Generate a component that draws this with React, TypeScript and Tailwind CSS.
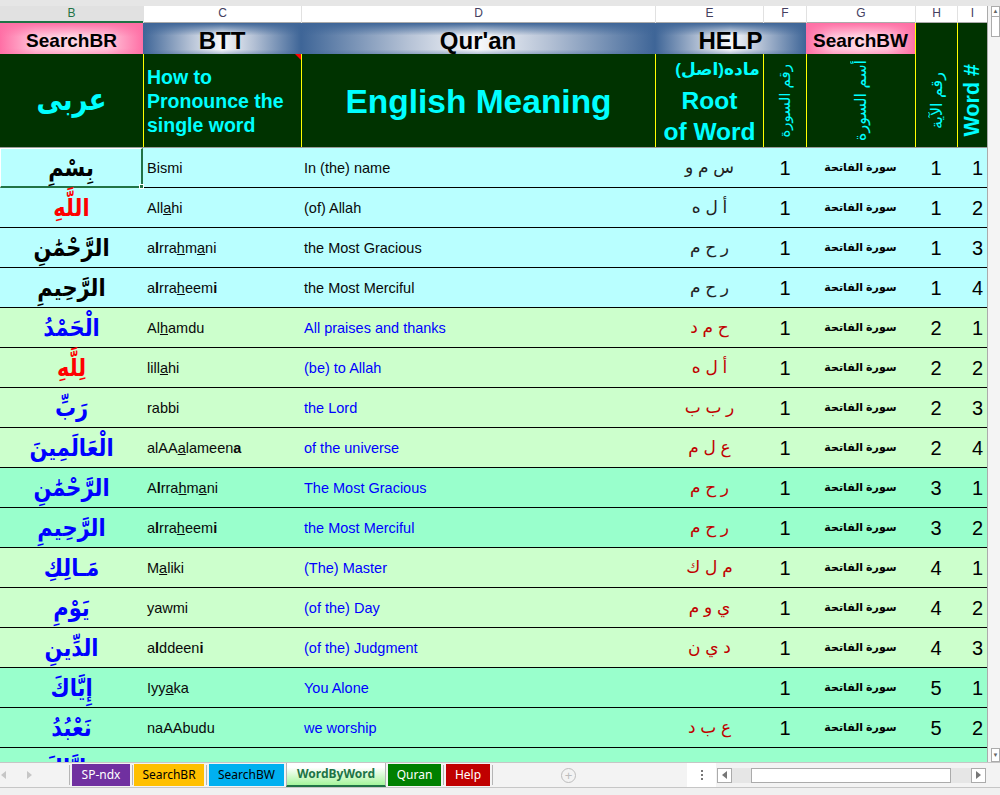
import { ReactNode } from 'react'

const cols = 'grid grid-cols-[143px_158px_354px_108px_43px_109px_42px_30px]'
const banner =
  'bg-[linear-gradient(180deg,#3e6597_0%,#3e659700_32%,#3e659700_68%,#3e6597_100%),linear-gradient(90deg,#3e6597_0%,#b4c1d5_30%,#f8f9fb_50%,#b4c1d5_70%,#3e6597_100%)]'
const pink =
  'bg-[linear-gradient(180deg,#ff6fa5_0%,#ff6fa500_35%,#ff6fa500_65%,#ff6fa5_100%),linear-gradient(90deg,#ff6fa5_0%,#ffc4da_25%,#ffd6e4_50%,#ffc4da_75%,#ff6fa5_100%)]'

interface Row {
  bg: string
  ar: string
  say: ReactNode
  en: string
  root: string
  aya?: number
  word?: number
  red?: boolean
}

const cyan = 'bg-[#b9ffff]'
const mint = 'bg-[#ccffcc]'
const teal = 'bg-[#99ffcc]'

const rows: Row[] = [
  { bg: cyan, ar: 'بِسْمِ', say: 'Bismi', en: 'In (the) name', root: 'س م و', aya: 1, word: 1 },
  { bg: cyan, ar: 'اللَّهِ', say: <>All<u>a</u>hi</>, en: '(of) Allah', root: 'أ ل ه', aya: 1, word: 2, red: true },
  { bg: cyan, ar: 'الرَّحْمَٰنِ', say: <>a<b>l</b>rra<u>h</u>m<u>a</u>ni</>, en: 'the Most Gracious', root: 'ر ح م', aya: 1, word: 3 },
  { bg: cyan, ar: 'الرَّحِيمِ', say: <>a<b>l</b>rra<u>h</u>eem<b>i</b></>, en: 'the Most Merciful', root: 'ر ح م', aya: 1, word: 4 },
  { bg: mint, ar: 'الْحَمْدُ', say: <>Al<u>h</u>amdu</>, en: 'All praises and thanks', root: 'ح م د', aya: 2, word: 1 },
  { bg: mint, ar: 'لِلَّهِ', say: <>lill<u>a</u>hi</>, en: '(be) to Allah', root: 'أ ل ه', aya: 2, word: 2, red: true },
  { bg: mint, ar: 'رَبِّ', say: 'rabbi', en: 'the Lord', root: 'ر ب ب', aya: 2, word: 3 },
  { bg: mint, ar: 'الْعَالَمِينَ', say: <>alAA<u>a</u>lameen<b>a</b></>, en: 'of the universe', root: 'ع ل م', aya: 2, word: 4 },
  { bg: teal, ar: 'الرَّحْمَٰنِ', say: <>A<b>l</b>rra<u>h</u>m<u>a</u>ni</>, en: 'The Most Gracious', root: 'ر ح م', aya: 3, word: 1 },
  { bg: teal, ar: 'الرَّحِيمِ', say: <>a<b>l</b>rra<u>h</u>eem<b>i</b></>, en: 'the Most Merciful', root: 'ر ح م', aya: 3, word: 2 },
  { bg: mint, ar: 'مَـالِكِ', say: <>M<u>a</u>liki</>, en: '(The) Master', root: 'م ل ك', aya: 4, word: 1 },
  { bg: mint, ar: 'يَوْمِ', say: 'yawmi', en: '(of the) Day', root: 'ي و م', aya: 4, word: 2 },
  { bg: mint, ar: 'الدِّينِ', say: <>a<b>l</b>ddeen<b>i</b></>, en: '(of the) Judgment', root: 'د ي ن', aya: 4, word: 3 },
  { bg: teal, ar: 'إِيَّاكَ', say: <>Iyy<u>a</u>ka</>, en: 'You Alone', root: '', aya: 5, word: 1 },
  { bg: teal, ar: 'نَعْبُدُ', say: 'naAAbudu', en: 'we worship', root: 'ع ب د', aya: 5, word: 2 },
  { bg: teal, ar: 'وَإِيَّاكَ', say: '', en: '', root: '' },
]

const letters = ['B', 'C', 'D', 'E', 'F', 'G', 'H', 'I']

function Sideways({ children, className }: { children: ReactNode; className: string }) {
  return (
    <div className="flex items-center justify-center border-l border-[#ffff00] overflow-hidden">
      <span className={`[writing-mode:vertical-rl] rotate-180 whitespace-nowrap text-[#00ffff] ${className}`}>
        {children}
      </span>
    </div>
  )
}

function Tab({ label, className }: { label: string; className: string }) {
  return (
    <div className={`h-[22px] flex items-center justify-center text-[12px] leading-none font-['Noto_Sans',sans-serif] ${className}`}>
      {label}
    </div>
  )
}

function TabSep({ className }: { className: string }) {
  return <div className={`w-px h-[20px] bg-[#b5b5b5] ${className}`} />
}

export default function App() {
  return (
    <div className="w-[1000px] h-[795px] overflow-hidden flex flex-col bg-[#e6e6e6] [font-family:'Liberation_Sans','DejaVu_Sans',sans-serif] text-black">
      <div className="h-[6px] shrink-0 bg-[#e6e6e6]" />

      <div className="flex-1 min-h-0 flex">
        <div className="w-[987px] shrink-0 flex flex-col overflow-hidden">
          <div className={`${cols} h-[17px] shrink-0 bg-white border-b border-[#ababab]`}>
            {letters.map((l) => (
              <div
                key={l}
                className={
                  l === 'B'
                    ? 'bg-[#e1e1e1] border-b-2 border-[#217346] text-[#217346] text-[12px] leading-[15px] text-center'
                    : 'border-l border-[#e1e1e1] text-[#44405f] text-[12px] leading-[15px] text-center'
                }
              >
                {l}
              </div>
            ))}
          </div>

          <div className={`${cols} h-[31px] shrink-0 border-b border-black`}>
            <div className={`${pink} flex items-center justify-center font-bold text-[19px] pb-[3px]`}>SearchBR</div>
            <div className={`${banner} flex items-center justify-center font-bold text-[24px] pb-[3px]`}>BTT</div>
            <div className={`${banner} flex items-center justify-center font-bold text-[24px] pb-[3px]`}>Qur'an</div>
            <div className={`${banner} col-span-2 flex items-center justify-center font-bold text-[24px] pb-[3px]`}>HELP</div>
            <div className={`${pink} flex items-center justify-center font-bold text-[19px] pb-[3px]`}>SearchBW</div>
            <div className="bg-[#003300] border-l border-[#ffff00]" />
            <div className="bg-[#003300] border-l border-[#ffff00]" />
          </div>

          <div className={`${cols} h-[94px] shrink-0 bg-[#003300] border-b border-[#9a9a9a]`}>
            <div className="flex items-center justify-center text-[#00ffff] font-bold text-[26px] pb-[2px]">
              <span className="inline-block scale-y-[1.2]">عربى</span>
            </div>
            <div className="relative flex items-center border-l border-[#ffff00] pl-[3px] text-[#00ffff] font-bold text-[19.5px] leading-[24px]">
              <div>
                How to
                <br />
                Pronounce the
                <br />
                single word
              </div>
              <span className="absolute top-0 right-0 w-0 h-0 border-t-[6px] border-l-[6px] border-t-[#ff0000] border-l-transparent" />
            </div>
            <div className="flex items-center justify-center border-l border-[#ffff00] pt-[3px] text-[#00ffff] font-bold text-[33.5px]">
              English Meaning
            </div>
            <div className="flex flex-col items-center justify-center border-l border-[#ffff00] text-[#00ffff] font-bold text-[24.5px] leading-[31px]">
              <span className="text-[17px] leading-[30px] pl-[16px]">ماده(اصل)</span>
              <span>Root</span>
              <span>of Word</span>
            </div>
            <Sideways className="text-[15px]">رقم السورة</Sideways>
            <Sideways className="text-[16px]">أسم السورة</Sideways>
            <Sideways className="text-[16px]">رقم الآية</Sideways>
            <Sideways className="font-bold text-[21.5px]">Word #</Sideways>
          </div>

          {rows.map((r, i) => (
            <div key={i} className={`${cols} h-[40px] shrink-0 border-b border-black ${r.bg} items-center`}>
              <div
                dir="rtl"
                className={`relative h-[40px] flex items-center justify-center font-bold text-[21px] ${
                  r.red ? 'text-[#ff0000]' : i < 4 ? 'text-black' : 'text-[#0000ff]'
                } ${i === 0 ? 'border border-white border-b-[#217346] border-b-2 border-r-[#217346] border-r-2' : ''}`}
              >
                <span className="inline-block scale-y-[1.15]">{r.ar}</span>
                {i === 0 && (
                  <span className="absolute -bottom-[3px] -right-[3px] w-[5px] h-[5px] bg-[#217346] border border-white" />
                )}
              </div>
              <div className="pl-[4px] pt-[2px] text-[14.5px] text-[#0a0a0a]">{r.say}</div>
              <div className={`pl-[3px] pt-[2px] text-[14.5px] ${i < 4 ? 'text-[#0a0a0a]' : 'text-[#0000ff]'}`}>{r.en}</div>
              <div dir="rtl" className={`text-center pl-[1px] text-[17px] ${i < 4 ? 'text-[#222]' : 'text-[#c00000]'}`}>
                {r.root}
              </div>
              <div className="text-center pl-[1px] text-[20px]">{r.word ? 1 : ''}</div>
              <div dir="rtl" className="text-center text-[11px] font-bold pb-[2px]">سورة الفاتحة</div>
              <div className="text-center text-[20px]">{r.aya}</div>
              <div className="text-right pr-[4px] text-[20px]">{r.word}</div>
            </div>
          ))}
        </div>

        <div className="flex-1 bg-[#f4f4f4] border-l border-[#ababab] flex flex-col justify-between items-end">
          <div className="flex flex-col">
            <div className="w-[9px] h-[11px] bg-white border border-[#ababab] flex items-center justify-center text-[6px] text-[#666]">▲</div>
            <div className="w-[9px] h-[20px] bg-white border border-t-0 border-[#ababab]" />
          </div>
          <div className="w-[9px] h-[14px] bg-white border border-[#ababab] flex items-center justify-center text-[6px] text-[#666]">▼</div>
        </div>
      </div>

      <div className="h-[26px] shrink-0 flex items-center bg-[#f3f3f3] border-t border-b border-[#c6c6c6]">
        <div className="w-[69px] flex items-center gap-[21px] pl-[1px]">
          <span className="w-0 h-0 border-y-[4px] border-r-[5px] border-y-transparent border-r-[#c6c6c6]" />
          <span className="w-0 h-0 border-y-[4px] border-l-[5px] border-y-transparent border-l-[#c6c6c6]" />
        </div>
        <TabSep className="mr-[2px]" />
        <Tab label="SP-ndx" className="w-[58px] bg-[#7030a0] text-white" />
        <TabSep className="ml-[2px] mr-[1px]" />
        <Tab label="SearchBR" className="w-[70px] bg-[#ffc000] text-black" />
        <TabSep className="ml-[2px] mr-[2px]" />
        <Tab label="SearchBW" className="w-[75px] bg-[#00b0f0] text-black" />
        <div className="w-[100px] h-[24px] ml-[2px] flex items-center justify-center text-[12px] font-bold text-[#217346] [font-family:'Noto_Sans',sans-serif] border-l border-r border-b-2 border-[#b5b5b5] border-b-[#217346] bg-[linear-gradient(180deg,#ffffff_20%,#a6f59c_100%)]">
          WordByWord
        </div>
        <Tab label="Quran" className="w-[53px] ml-[2px] bg-[#008000] text-white" />
        <TabSep className="ml-[2px] mr-[2px]" />
        <Tab label="Help" className="w-[44px] bg-[#c00000] text-white" />
        <TabSep className="ml-[2px]" />
        <div className="ml-[68px] w-[15px] h-[15px] rounded-full border border-[#bdbdbd] flex items-center justify-center text-[#bdbdbd] text-[13px] leading-none">+</div>
        <div className="flex-1" />
        <div className="self-stretch w-[29px] bg-white flex items-center justify-center">
          <div className="flex flex-col gap-[2px]">
            <span className="w-[2px] h-[2px] bg-[#777]" />
            <span className="w-[2px] h-[2px] bg-[#777]" />
            <span className="w-[2px] h-[2px] bg-[#777]" />
          </div>
        </div>
        <div className="w-[269px] h-[15px] ml-[1px] mr-[14px] flex items-center bg-[#e6e6e6]">
          <div className="w-[15px] h-[15px] bg-white border border-[#ababab] flex items-center justify-center">
            <span className="w-0 h-0 border-y-[4px] border-r-[5px] border-y-transparent border-r-[#777]" />
          </div>
          <div className="w-[19px]" />
          <div className="w-[200px] h-[15px] bg-white border border-[#ababab]" />
          <div className="flex-1" />
          <div className="w-[15px] h-[15px] bg-white border border-[#ababab] flex items-center justify-center">
            <span className="w-0 h-0 border-y-[4px] border-l-[5px] border-y-transparent border-l-[#777]" />
          </div>
        </div>
      </div>

      <div className="h-[7px] shrink-0 bg-[#f0f0f0]" />
    </div>
  )
}
